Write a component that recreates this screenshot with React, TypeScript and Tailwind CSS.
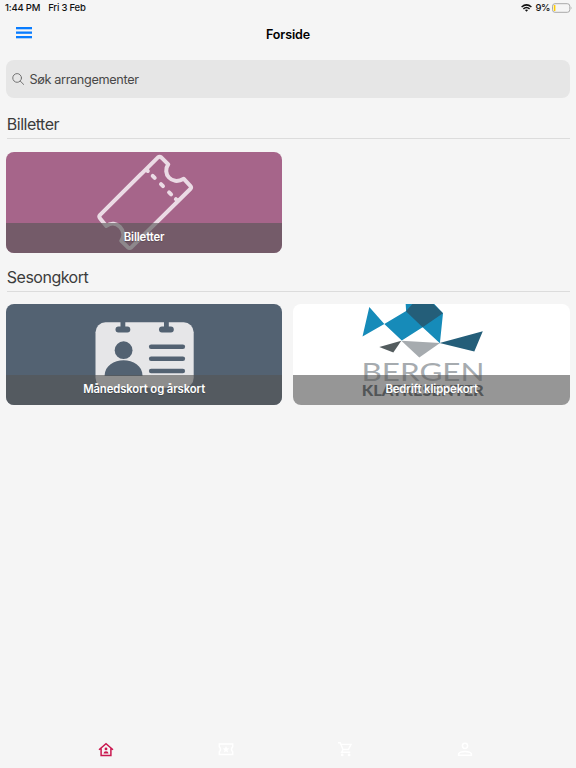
import type { ReactNode } from 'react'

interface TicketCardProps {
  title: string
  className: string
  children: ReactNode
}

function TicketCard({ title, className, children }: TicketCardProps) {
  return (
    <button
      type="button"
      className={`relative block h-[101px] w-full overflow-hidden rounded-lg ${className}`}
    >
      {children}
      <span className="absolute inset-x-0 bottom-0 flex h-[30px] items-center justify-center bg-[#565656]/62 text-[11.3px] font-semibold tracking-[-0.1px] text-white [text-shadow:0_1px_1px_rgba(0,0,0,0.2)]">
        {title}
      </span>
    </button>
  )
}

function Section({ title, children }: { title: string; children: ReactNode }) {
  return (
    <section>
      <h2 className="ml-px h-[29px] border-b border-[#dcdcdc] text-[16px] leading-7 tracking-[-0.5px] text-[#3c3c3c]">
        {title}
      </h2>
      <div className="mt-[12.2px] grid grid-cols-2 gap-[11px]">{children}</div>
    </section>
  )
}

function TicketArt() {
  return (
    <svg
      viewBox="6 152 276 101"
      className="h-full w-full"
      fill="none"
      stroke="#ebdbe5"
      strokeWidth="4"
      strokeLinecap="round"
      strokeLinejoin="round"
    >
      <path d="M161.2 157.6 L168 164.3 C161.5 173 171 186 183.5 178.8 L190 185.8 Q191.5 187.5 190 189 L131.2 247.2 Q129.3 248.8 127.4 247.2 L121 240.8 C127.5 231 116 218.5 106 226 L99.8 218.4 Q98.2 216.6 99.8 214.8 L157.4 157.6 Q159.3 156 161.2 157.6 Z" />
      <path d="M146.5 170 L147.5 171 M152.4 175.8 L154.4 177.8 M160.7 184.2 L162.7 186.2 M168.8 192.4 L170.8 194.4 M175.6 199.2 L176.4 200" />
    </svg>
  )
}

function MemberCardArt() {
  return (
    <svg viewBox="6 304 276 101" className="h-full w-full">
      <rect x="95.2" y="322.2" width="98.2" height="65.5" rx="10" fill="#e6e6e8" />
      <g fill="#536272">
        <rect x="120.2" y="320" width="4.8" height="9" />
        <rect x="115.2" y="326.6" width="14.8" height="5.8" rx="2.9" />
        <rect x="163.7" y="320" width="4.8" height="9" />
        <rect x="158.7" y="326.6" width="14.8" height="5.8" rx="2.9" />
        <circle cx="123.3" cy="350.2" r="8.9" />
        <path d="M104.3 376 C104.5 355 142 355 142.3 376 Z" />
        <rect x="148.6" y="344.6" width="36.2" height="4.4" rx="2.2" />
        <rect x="148.6" y="356.6" width="36.2" height="4.4" rx="2.2" />
        <rect x="148.6" y="368.8" width="36.2" height="4.4" rx="2.2" />
      </g>
    </svg>
  )
}

function BergenLogo() {
  return (
    <svg viewBox="294 304 276 101" className="h-full w-full">
      <path
        fill="#168bb9"
        d="M370 307 L385 324 L363.2 336.4 Z M385 324 L406.8 311 L406.3 303 L434 303 L443.7 313.3 L440.6 343.3 L423.3 327.3 L402.5 340.6 Z"
      />
      <path
        fill="#245e79"
        d="M406.6 311.2 L414 303 L433 303 L443.7 313.3 L423.3 327.3 Z M440.3 343.1 L483.5 331.3 L475 351.5 Z"
      />
      <path fill="#535c5e" d="M380 347 L402 340.7 L394 352.5 Z" />
      <path fill="#a6abaf" d="M402 340.7 L440.7 343 L420 357.5 Z" />
      <text
        x="362.2"
        y="381"
        textLength="123"
        lengthAdjust="spacingAndGlyphs"
        fontSize="25"
        fill="#a6abaf"
        fontFamily="Lato, sans-serif"
      >
        BERGEN
      </text>
      <text
        x="362.5"
        y="395.8"
        textLength="122"
        lengthAdjust="spacingAndGlyphs"
        fontSize="15"
        fontWeight="900"
        fill="#4d5659"
        fontFamily="Lato, sans-serif"
      >
        KLATRESENTER
      </text>
    </svg>
  )
}

function StatusBar() {
  return (
    <div className="flex h-4 items-center justify-between pr-1 pl-[5px] text-[9.5px] font-medium tracking-[-0.2px] text-[#111]">
      <div className="flex gap-[8px]">
        <span>1:44 PM</span>
        <span>Fri 3 Feb</span>
      </div>
      <div className="flex items-center">
        <svg viewBox="0 0 11 8" className="mr-[3px] h-2 w-[11px]" fill="none" stroke="#111" strokeWidth="1.5">
          <path d="M0.6 3 Q5.5 -1.2 10.4 3 M2.4 4.9 Q5.5 2.2 8.6 4.9" />
          <path d="M3.9 6.1 Q5.5 4.9 7.1 6.1 L5.5 7.8 Z" fill="#111" stroke="none" />
        </svg>
        <span className="tracking-[-0.4px]">9%</span>
        <svg viewBox="0 0 20 10" className="ml-[2px] h-2.5 w-5">
          <rect x="0.5" y="0.7" width="17.3" height="8.6" rx="2.5" fill="none" stroke="#a9a9a9" />
          <rect x="1.8" y="2" width="1.6" height="6" rx="0.6" fill="#ffcc00" />
          <path d="M18.8 3.5 Q20.2 5 18.8 6.5 Z" fill="#a9a9a9" />
        </svg>
      </div>
    </div>
  )
}

function TabBar() {
  return (
    <nav className="mt-auto grid h-[37px] grid-cols-4 pt-[10px] pr-[51px] pl-[46px] *:flex *:justify-center">
      <button type="button" aria-label="Forside">
        <svg viewBox="0 0 16 16" className="size-4" fill="none" stroke="#c9184f" strokeWidth="1.5">
          <path d="M1 8.8 L8 2.8 L15 8.8 M3.1 7.5 V14.6 H12.9 V7.5" />
          <circle cx="8" cy="7.9" r="1.4" fill="#c9184f" stroke="none" />
          <path d="M5.5 12.5 Q5.7 10.2 8 10.2 Q10.3 10.2 10.5 12.5 Z" fill="#c9184f" stroke="none" />
        </svg>
      </button>
      <button type="button" aria-label="Mine billetter">
        <svg viewBox="0 0 16 16" className="size-4" fill="none" stroke="#fff" strokeWidth="1.5">
          <path d="M1.3 3 H14.7 V5.8 Q12.3 8.3 14.7 10.8 V13.6 H1.3 V10.8 Q3.7 8.3 1.3 5.8 Z" />
          <path
            d="M8 5 L9 7.3 L11.4 7.5 L9.5 9.1 L10.1 11.5 L8 10.2 L5.9 11.5 L6.5 9.1 L4.6 7.5 L7 7.3 Z"
            fill="#fff"
            stroke="none"
          />
        </svg>
      </button>
      <button type="button" aria-label="Handlekurv">
        <svg viewBox="0 0 16 16" className="size-4" fill="none" stroke="#fff" strokeWidth="1.4">
          <path d="M1 1.8 H3.2 L6 8.5 H11.4 L14 3.4 H4 M6 8.5 L4.6 11.3 H13.2" />
          <circle cx="5.2" cy="13.9" r="1.4" fill="#fff" stroke="none" />
          <circle cx="12.1" cy="13.9" r="1.4" fill="#fff" stroke="none" />
        </svg>
      </button>
      <button type="button" aria-label="Profil">
        <svg viewBox="0 0 16 16" className="size-4" fill="none" stroke="#fff" strokeWidth="1.5">
          <circle cx="8" cy="4.8" r="2.6" />
          <path d="M1.6 14.3 V12.8 Q3 10.5 8 10.5 Q13 10.5 14.4 12.8 V14.3 Z" />
        </svg>
      </button>
    </nav>
  )
}

export default function App() {
  return (
    <div className="flex h-screen flex-col bg-[#f5f5f5] font-[Inter,sans-serif]">
      <StatusBar />

      <header className="grid h-11 grid-cols-3 items-center px-4">
        <button type="button" aria-label="Meny" className="-mt-[11px]">
          <svg viewBox="0 0 16 12" className="h-3 w-4" fill="#087cff">
            <rect y="0" width="16" height="2.3" />
            <rect y="4.5" width="16" height="2.3" />
            <rect y="9" width="16" height="2.3" />
          </svg>
        </button>
        <h1 className="-mt-1.5 text-center text-[12.5px] font-semibold tracking-[-0.1px] text-black">
          Forside
        </h1>
      </header>

      <main className="pr-1.5 pl-[5.8px]">
        <label className="flex h-[38px] items-center gap-[5px] rounded-lg bg-[#e6e6e6] pl-[6px]">
          <svg viewBox="0 0 13 13" className="size-[13px]" fill="none" stroke="#707070" strokeLinecap="round">
            <circle cx="5.3" cy="4.9" r="4.5" />
            <path d="M8.6 8.2 L12.2 11.8" />
          </svg>
          <input
            type="search"
            placeholder="Søk arrangementer"
            className="w-full bg-transparent pt-[2px] text-[12.7px] tracking-[-0.35px] outline-none placeholder:text-[#484848]"
          />
        </label>

        <div className="mt-[12.4px] space-y-[9.95px]">
          <Section title="Billetter">
            <TicketCard title="Billetter" className="bg-[#a6658a]">
              <TicketArt />
            </TicketCard>
          </Section>
          <Section title="Sesongkort">
            <TicketCard title="Månedskort og årskort" className="bg-[#536272]">
              <MemberCardArt />
            </TicketCard>
            <TicketCard title="Bedrift klippekort" className="bg-white">
              <BergenLogo />
            </TicketCard>
          </Section>
        </div>
      </main>

      <TabBar />
    </div>
  )
}
